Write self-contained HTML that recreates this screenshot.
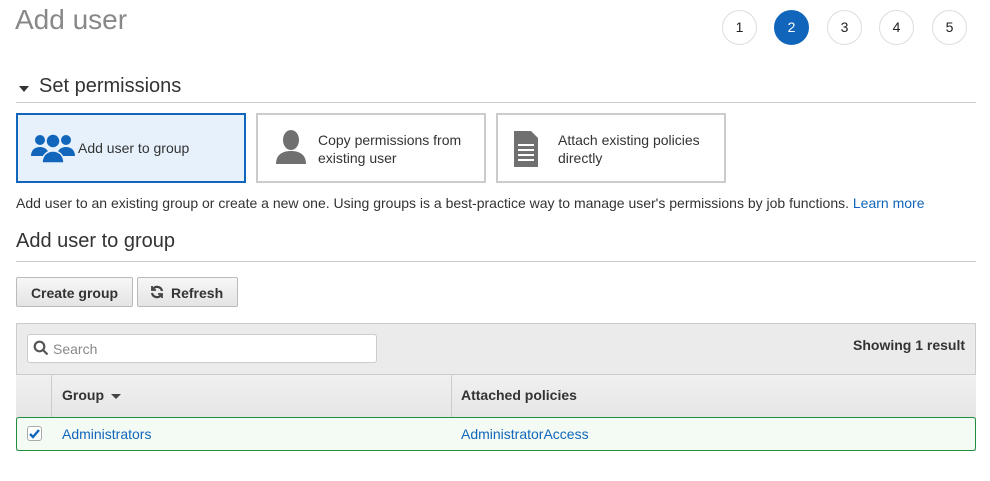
<!DOCTYPE html>
<html><head><style>
body{margin:0;width:990px;height:481px;background:#fff;font-family:"Liberation Sans",Arial,sans-serif;position:relative;overflow:hidden;color:#333}
.a{position:absolute}
.c{position:absolute;top:10px;width:33px;height:33px;border:1px solid #ddd;border-radius:50%;text-align:center;line-height:33px;font-size:14px;color:#222;box-sizing:content-box}
.card{position:absolute;top:113px;height:70px;border:2px solid #ccc;background:#fff;font-size:14px;color:#333;box-sizing:border-box}
.btn{position:absolute;top:277px;height:30px;border:1px solid #bbb;border-radius:2px;background:linear-gradient(#f7f7f7,#e4e4e4);font-weight:bold;font-size:14px;line-height:30px;box-sizing:border-box;color:#333}
a{color:#1166bb;text-decoration:none}
</style></head><body>
<div class="a" style="left:15px;top:4px;font-size:28px;color:#888">Add user</div>
<div class="c" style="left:722px">1</div>
<div class="c" style="left:774px;background:#1166bb;border-color:#1166bb;color:#fff">2</div>
<div class="c" style="left:827px">3</div>
<div class="c" style="left:879px">4</div>
<div class="c" style="left:932px">5</div>
<div class="a" style="left:19px;top:86px;width:0;height:0;border-left:5px solid transparent;border-right:5px solid transparent;border-top:6px solid #333"></div>
<div class="a" style="left:39px;top:75px;font-size:20px;color:#333">Set permissions</div>
<div class="a" style="left:16px;top:102px;width:960px;height:1px;background:#ccc"></div>
<div class="card" style="left:16px;width:230px;border-color:#1166bb;background:#e6f1fc">
<svg class="a" style="left:12px;top:17px" width="46" height="32" viewBox="0 0 46 32" fill="#1166bb"><circle cx="10" cy="8" r="5"/><circle cx="36" cy="8" r="5"/><path d="M1 24c0-6 4-9 9-9s9 3 9 9zM27 24c0-6 4-9 9-9s9 3 9 9z"/><circle cx="23" cy="9" r="7" stroke="#e6f1fc" stroke-width="1.5"/><path d="M12 31c0-8 5-12 11-12s11 4 11 12z" stroke="#e6f1fc" stroke-width="1.5"/></svg>
<div class="a" style="left:60px;top:25px">Add user to group</div></div>
<div class="card" style="left:256px;width:230px">
<svg class="a" style="left:16px;top:15px" width="34" height="36" viewBox="0 0 34 36" fill="#707070"><ellipse cx="17" cy="10" rx="8" ry="10"/><path d="M2 34c0-9 6-13 15-13s15 4 15 13z"/></svg>
<div class="a" style="left:60px;top:16px;line-height:18px">Copy permissions from<br>existing user</div></div>
<div class="card" style="left:496px;width:230px">
<svg class="a" style="left:16px;top:16px" width="24" height="36" viewBox="0 0 24 36"><path d="M0 0h17l7 7v29H0z" fill="#707070"/><path d="M4 14h16M4 19h16M4 24h16M4 29h16" stroke="#fff" stroke-width="2"/></svg>
<div class="a" style="left:60px;top:16px;line-height:18px">Attach existing policies<br>directly</div></div>
<div class="a" style="left:16px;top:195px;font-size:14px;color:#333">Add user to an existing group or create a new one. Using groups is a best-practice way to manage user's permissions by job functions. <a>Learn more</a></div>
<div class="a" style="left:16px;top:230px;font-size:20px;color:#333">Add user to group</div>
<div class="a" style="left:16px;top:261px;width:960px;height:1px;background:#ccc"></div>
<div class="btn" style="left:16px;width:117px;text-align:center">Create group</div>
<div class="btn" style="left:137px;width:101px">
<svg class="a" style="left:12px;top:7px" width="14" height="14" viewBox="0 0 14 14" fill="none" stroke="#444" stroke-width="2.2"><path d="M12 6A5 5 0 0 0 3 4M2 8a5 5 0 0 0 9 2"/><path d="M2 1v4h4M12 13V9H8" stroke-width="1.8"/></svg>
<span class="a" style="left:33px">Refresh</span></div>
<div class="a" style="left:16px;top:323px;width:960px;height:128px;border:1px solid #ccc;box-sizing:border-box;background:#ebebeb"></div>
<div class="a" style="left:27px;top:334px;width:350px;height:29px;border:1px solid #ccc;border-radius:3px;background:#fff;box-sizing:border-box"></div>
<svg class="a" style="left:33px;top:340px" width="16" height="16" viewBox="0 0 16 16" fill="none" stroke="#555" stroke-width="2.2"><circle cx="6.5" cy="6.5" r="4.8"/><path d="M10 10l4.5 4.5"/></svg>
<div class="a" style="left:53px;top:341px;font-size:14px;color:#888">Search</div>
<div class="a" style="left:853px;top:337px;font-size:14px;font-weight:bold;color:#333">Showing 1 result</div>
<div class="a" style="left:16px;top:374px;width:960px;height:1px;background:#ccc"></div>
<div class="a" style="left:16px;top:375px;width:960px;height:42px;background:linear-gradient(#f0f0f0,#e6e6e6)"></div>
<div class="a" style="left:51px;top:375px;width:1px;height:42px;background:#ccc"></div>
<div class="a" style="left:451px;top:375px;width:1px;height:42px;background:#ccc"></div>
<div class="a" style="left:62px;top:387px;font-size:14px;font-weight:bold">Group</div>
<div class="a" style="left:111px;top:394px;width:0;height:0;border-left:5px solid transparent;border-right:5px solid transparent;border-top:5px solid #444"></div>
<div class="a" style="left:461px;top:387px;font-size:14px;font-weight:bold">Attached policies</div>
<div class="a" style="left:16px;top:417px;width:960px;height:34px;border:1px solid #1d8f3a;border-radius:3px;background:#f4fbf4;box-sizing:border-box"></div>
<div class="a" style="left:27px;top:426px;width:15px;height:15px;border:1px solid #aaa;border-radius:3px;background:#fff;box-sizing:border-box"></div>
<svg class="a" style="left:28px;top:427px" width="13" height="13" viewBox="0 0 13 13" fill="none" stroke="#1166bb" stroke-width="2.4"><path d="M2 7l3 3 6-7"/></svg>
<div class="a" style="left:62px;top:426px;font-size:14px"><a>Administrators</a></div>
<div class="a" style="left:461px;top:426px;font-size:14px"><a>AdministratorAccess</a></div>
</body></html>
